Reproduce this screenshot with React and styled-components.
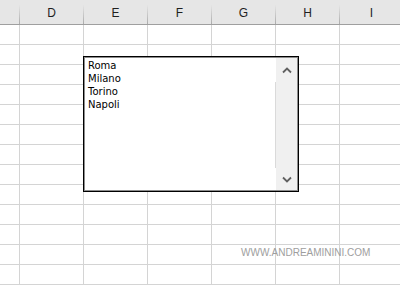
import styled, { createGlobalStyle } from 'styled-components';

const GlobalStyle = createGlobalStyle`
	html, body {
		margin: 0;
		padding: 0;
		background: #ffffff;
	}
	body {
		font-family: 'Liberation Sans', Arial, sans-serif;
	}
`;

const columns = ['D', 'E', 'F', 'G', 'H', 'I'];
const rowCount = 13;
const cities = ['Roma', 'Milano', 'Torino', 'Napoli'];

function Chevron({ up }) {
	return (
		<svg width="10" height="7" viewBox="0 0 10 7">
			<path
				d={up ? 'M1 5.5 L5 1.5 L9 5.5' : 'M1 1.5 L5 5.5 L9 1.5'}
				fill="none"
				stroke="#606060"
				strokeWidth="1.8"
			/>
		</svg>
	);
}

function App() {
	return (
		<>
			<GlobalStyle />
			<Sheet>
				<HeaderRow>
					<Corner />
					{columns.map((c) => (
						<ColHeader key={c}>{c}</ColHeader>
					))}
				</HeaderRow>
				{Array.from({ length: rowCount }).map((_, r) => (
					<Row key={r}>
						<RowHead />
						{columns.map((c) => (
							<Cell key={c} />
						))}
					</Row>
				))}

				<ListBox>
					<Items>
						{cities.map((city) => (
							<Item key={city}>{city}</Item>
						))}
					</Items>
					<ScrollBar>
						<ScrollButton $h={24}>
							<Chevron up />
						</ScrollButton>
						<Track />
						<ScrollButton $h={22}>
							<Chevron />
						</ScrollButton>
					</ScrollBar>
				</ListBox>

				<Watermark>WWW.ANDREAMININI.COM</Watermark>
			</Sheet>
		</>
	);
}

const Sheet = styled.div`
	position: relative;
	width: 400px;
	height: 285px;
	overflow: hidden;
	background: #ffffff;
`;

const HeaderRow = styled.div`
	display: grid;
	grid-template-columns: 20px repeat(6, 64px);
	height: 25px;
	background: #e6e6e6;
	border-bottom: 1px solid #9f9f9f;
	box-sizing: border-box;
`;

const Corner = styled.div`
	border-right: 1px solid;
	border-image: linear-gradient(to bottom, #e6e6e6 22%, #a8a8a8) 1;
`;

const ColHeader = styled.div`
	display: flex;
	align-items: center;
	justify-content: center;
	font-size: 12px;
	color: #1f1f1f;
	padding-top: 1px;
	border-right: 1px solid;
	border-image: linear-gradient(to bottom, #e6e6e6 22%, #a8a8a8) 1;
`;

const Row = styled.div`
	display: grid;
	grid-template-columns: 20px repeat(6, 64px);
	height: 20px;
`;

const Cell = styled.div`
	border-right: 1px solid #d4d4d4;
	border-bottom: 1px solid #d4d4d4;
`;

const RowHead = styled(Cell)``;

const ListBox = styled.div`
	position: absolute;
	left: 83px;
	top: 56px;
	width: 216px;
	height: 136px;
	box-sizing: border-box;
	border: 1px solid #000000;
	box-shadow: inset 0 0 0 1px rgba(0, 0, 0, 0.45);
	background: #ffffff;
	display: flex;
	padding: 1px;
`;

const Items = styled.div`
	flex: 1;
	padding: 1px 0 0 3px;
	display: flex;
	flex-direction: column;
`;

const Item = styled.div`
	font-family: 'DejaVu Sans', Verdana, sans-serif;
	font-size: 10px;
	line-height: 13px;
	color: #000000;
`;

const ScrollBar = styled.div`
	width: 21px;
	background: #f0f0f0;
	display: flex;
	flex-direction: column;
`;

const ScrollButton = styled.div`
	height: ${(p) => p.$h}px;
	display: flex;
	align-items: center;
	justify-content: center;
`;

const Track = styled.div`
	flex: 1;
	box-shadow: -1px 0 0 #dadada;
`;

const Watermark = styled.div`
	position: absolute;
	left: 241px;
	top: 247px;
	font-family: 'Liberation Sans', Arial, sans-serif;
	font-size: 10px;
	line-height: 12px;
	color: #9e9e9e;
`;

export default App;
